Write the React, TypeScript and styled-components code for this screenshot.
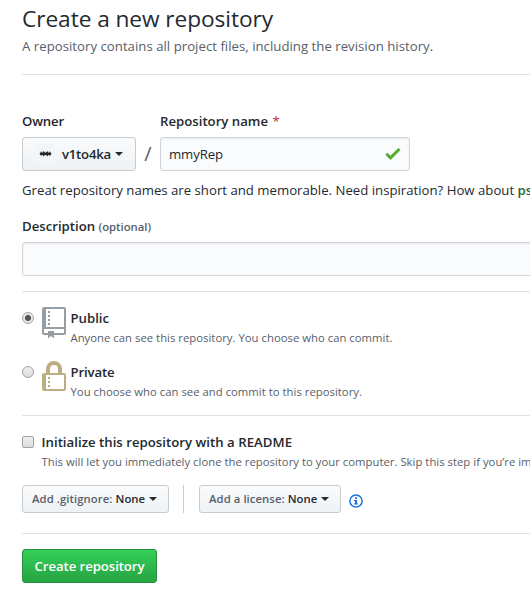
import React from "react";
import styled, { createGlobalStyle } from "styled-components";

const GlobalStyle = createGlobalStyle`
  * { box-sizing: border-box; }
  html, body { margin: 0; overflow: hidden; background: #fff; }
  body {
    font-family: "Open Sans", "Segoe UI", sans-serif;
    font-size: 13.2px;
    line-height: 20px;
    color: #24292e;
  }
  button, input { font: inherit; color: inherit; }
`;

const Page = styled.form`
  display: flex;
  flex-direction: column;
  height: 613px;
  padding: 4px 0 0 22px;
  overflow: hidden;
  white-space: nowrap;
`;

const Title = styled.h1`
  margin: 0;
  font-size: 22.7px;
  font-weight: 400;
  line-height: 30px;
  letter-spacing: -0.07px;
`;

const Lead = styled.p`
  margin: 2px 0 0;
  color: #586069;
  letter-spacing: 0.02px;
`;

const Divider = styled.hr<{ $top: number; $bottom: number }>`
  flex: none;
  width: 100%;
  height: 1px;
  border: 0;
  margin: ${(p) => p.$top}px 0 ${(p) => p.$bottom}px;
  background: #dfe2e5;
`;

const NameRow = styled.div`
  display: flex;
  align-items: flex-end;
  height: 60px;
`;

const Field = styled.div`
  display: flex;
  flex-direction: column;
  gap: 6px;
`;

const Label = styled.label<{ $spacing?: number }>`
  height: 20px;
  font-weight: 600;
  letter-spacing: ${(p) => p.$spacing ?? 0}px;
`;

const Required = styled.span`
  margin-left: 1px;
  font-weight: 400;
  color: #cb2431;
`;

const Optional = styled.span`
  font-size: 11.3px;
  color: #586069;
`;

const DropButton = styled.button<{ $size?: "small"; $width: number }>`
  display: flex;
  align-items: center;
  flex: none;
  width: ${(p) => p.$width}px;
  height: ${(p) => (p.$size === "small" ? 28 : 34)}px;
  padding: 0 9px;
  border: 1px solid #c8cbce;
  border-radius: 3px;
  background: linear-gradient(#fafbfc, #eff3f6 90%);
  font-size: ${(p) => (p.$size === "small" ? 11.3 : 13.2)}px;
  font-weight: 600;
  letter-spacing: ${(p) => (p.$size === "small" ? 0.07 : -0.23)}px;
`;

const Avatar = styled.svg`
  width: 19px;
  height: 20px;
  margin: 0 7px 0 4px;
  background: #f4f5f7;
`;

const Caret = styled.span`
  margin-left: 4px;
  border: 4px solid transparent;
  border-top-color: #24292e;
  border-bottom: 0;
`;

const Slash = styled.span`
  width: 24px;
  height: 34px;
  text-align: center;
  font-size: 20px;
  line-height: 33px;
  color: #586069;
`;

const InputBox = styled.div<{ $width: number }>`
  display: flex;
  align-items: center;
  flex: none;
  width: ${(p) => p.$width}px;
  height: 34px;
  padding: 0 8px;
  border: 1px solid #d1d5da;
  border-radius: 3px;
  background: #fafbfc;
  box-shadow: inset 0 1px 2px rgba(27, 31, 35, 0.075);
`;

const TextInput = styled.input`
  flex: 1;
  min-width: 0;
  padding: 0;
  border: 0;
  outline: 0;
  background: transparent;
  letter-spacing: -0.1px;
`;

const Hint = styled.p`
  margin: 9px 0 16px;
`;

const Suggestion = styled.strong`
  font-weight: 600;
  color: #22662f;
`;

const Option = styled.label`
  display: flex;
  align-items: flex-start;
  height: 54px;
`;

const Radio = styled.input.attrs({ type: "radio" })`
  appearance: none;
  flex: none;
  width: 12px;
  height: 12px;
  margin: 4px 0 0;
  border: 1px solid #a3a3a3;
  border-radius: 50%;
  background: linear-gradient(#eee, #dcdcdc);
  &:checked {
    background: radial-gradient(circle, #555 0 2.6px, #e8e8e8 3.5px);
  }
`;

const Checkbox = styled.input.attrs({ type: "checkbox" })`
  appearance: none;
  flex: none;
  width: 12px;
  height: 12px;
  margin: 4px 0 0;
  border: 1px solid #a3a3a3;
  border-radius: 2px;
  background: linear-gradient(#eee, #dcdcdc);
`;

const TypeIcon = styled.svg`
  flex: none;
  width: 24px;
  height: 32px;
  margin: -1px 4.5px 0 8px;
`;

const OptionText = styled.div`
  display: flex;
  flex-direction: column;
  gap: 1px;
`;

const OptionTitle = styled.span<{ $spacing?: number }>`
  font-weight: 600;
  letter-spacing: ${(p) => p.$spacing ?? 0}px;
`;

const Note = styled.span`
  font-size: 11.3px;
  line-height: 18px;
  color: #586069;
  letter-spacing: 0.02px;
`;

const ReadmeRow = styled.label`
  display: flex;
  gap: 7.5px;
  height: 53px;
`;

const TemplateRow = styled.div`
  display: flex;
  align-items: center;
`;

const Separator = styled.span`
  width: 1px;
  height: 28px;
  margin: 0 15px 0 14px;
  background: #c9cdd1;
`;

const Muted = styled.span`
  margin-right: 3px;
  color: #586069;
`;

const InfoIcon = styled.svg`
  width: 14px;
  height: 14px;
  margin: 4px 0 0 8px;
`;

const SubmitButton = styled.button`
  width: 135px;
  height: 34px;
  padding: 0;
  border: 1px solid #28903f;
  border-radius: 3px;
  background: linear-gradient(#34d058, #28a745 90%);
  color: #fff;
  font-weight: 600;
  letter-spacing: -0.08px;
`;

export default function App() {
  return (
    <>
      <GlobalStyle />
      <Page>
        <Title>Create a new repository</Title>
        <Lead>A repository contains all project files, including the revision history.</Lead>
        <Divider $top={18} $bottom={36} />

        <NameRow>
          <Field>
            <Label $spacing={-0.16}>Owner</Label>
            <DropButton type="button" $width={114}>
              <Avatar viewBox="0 0 19 20">
                <path
                  d="M3.5 9.8L5.5 7v1.6h1.2L7.8 7l1 1.6h1.4l1-1.6 1.1 1.6h1.2V7l2 2.8-2 2.8v-1.7h-1.2l-1.1 1.7-1-1.7H8.800l-1 1.700-1.100-1.700H5.500v1.700z"
                  fill="#24292e"
                />
              </Avatar>
              v1to4ka
              <Caret />
            </DropButton>
          </Field>
          <Slash>/</Slash>
          <Field>
            <Label>
              Repository name <Required>*</Required>
            </Label>
            <InputBox $width={250}>
              <TextInput defaultValue="mmyRep" />
              <svg width="16" height="12" viewBox="0 0 16 12">
                <path d="M1.4 5.800l4.100 4 9-8.800" fill="none" stroke="#55ae33" strokeWidth="3" />
              </svg>
            </InputBox>
          </Field>
        </NameRow>

        <Hint>
          Great repository names are short and memorable. Need inspiration? How about{" "}
          <Suggestion>ps</Suggestion>
        </Hint>

        <Field>
          <Label>
            Description <Optional>(optional)</Optional>
          </Label>
          <InputBox $width={560}>
            <TextInput />
          </InputBox>
        </Field>
        <Divider $top={15} $bottom={16} />

        <Option>
          <Radio name="visibility" defaultChecked />
          <TypeIcon viewBox="0 0 24 32">
            <path
              d="M6 27H2a1 1 0 0 1-1-1V2a1 1 0 0 1 1-1h20a1 1 0 0 1 1 1v24a1 1 0 0 1-1 1H12M1 21h22M3 1v20"
              fill="none"
              stroke="#959da5"
              strokeWidth="2"
            />
            <path d="M6 24h6v7.500l-3-2.500-3 2.500zM6 4h2v2H6zm0 4h2v2H6zm0 4h2v2H6zm0 4h2v2H6z" fill="#959da5" />
          </TypeIcon>
          <OptionText>
            <OptionTitle>Public</OptionTitle>
            <Note>Anyone can see this repository. You choose who can commit.</Note>
          </OptionText>
        </Option>
        <Option>
          <Radio name="visibility" />
          <TypeIcon viewBox="0 0 24 32">
            <path d="M6 13V8a6 6 0 0 1 12 0v5" fill="none" stroke="#bcad84" strokeWidth="4" />
            <path
              d="M2 13h20a1 1 0 0 1 1 1v14a1 1 0 0 1-1 1H2a1 1 0 0 1-1-1V14a1 1 0 0 1 1-1zM3 13v16"
              fill="none"
              stroke="#bcad84"
              strokeWidth="2"
            />
            <path d="M6 16h2v2H6zm0 4h2v2H6zm0 4h2v2H6z" fill="#bcad84" />
          </TypeIcon>
          <OptionText>
            <OptionTitle $spacing={-0.15}>Private</OptionTitle>
            <Note>You choose who can see and commit to this repository.</Note>
          </OptionText>
        </Option>
        <Divider $top={-1} $bottom={16} />

        <ReadmeRow>
          <Checkbox />
          <OptionText>
            <OptionTitle $spacing={0.02}>Initialize this repository with a README</OptionTitle>
            <Note>
              This will let you immediately clone the repository to your computer. Skip this step if you’re
              importing
            </Note>
          </OptionText>
        </ReadmeRow>

        <TemplateRow>
          <DropButton type="button" $size="small" $width={147}>
            <Muted>Add .gitignore:</Muted>None
            <Caret />
          </DropButton>
          <Separator />
          <DropButton type="button" $size="small" $width={142}>
            <Muted>Add a license:</Muted>None
            <Caret />
          </DropButton>
          <InfoIcon viewBox="0 0 14 14">
            <circle cx="7" cy="7" r="6.1" fill="none" stroke="#1b75de" strokeWidth="1.5" />
            <path d="M6 3.3h2V5H6zM5 6h3v3.5h1v1H5v-1h1V7H5z" fill="#1b75de" />
          </InfoIcon>
        </TemplateRow>
        <Divider $top={20} $bottom={15} />
        <SubmitButton type="submit">Create repository</SubmitButton>
      </Page>
    </>
  );
}
